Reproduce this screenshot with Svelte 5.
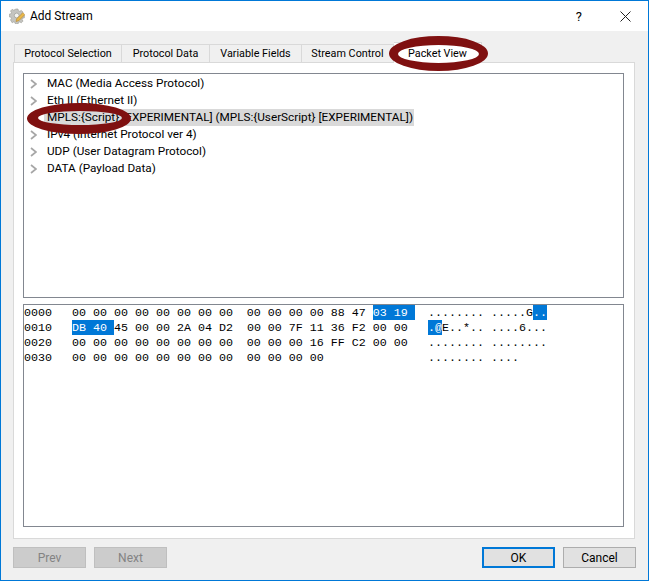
<script lang="ts">
    const tabs = ["Protocol Selection", "Protocol Data", "Variable Fields", "Stream Control", "Packet View"];
    const protocols = [
        "MAC (Media Access Protocol)",
        "Eth II (Ethernet II)",
        "MPLS:{Script} [EXPERIMENTAL] (MPLS:{UserScript} [EXPERIMENTAL])",
        "IPv4 (Internet Protocol ver 4)",
        "UDP (User Datagram Protocol)",
        "DATA (Payload Data)",
    ];
    // before / selected / after for the hex and ascii columns
    const rows = [
        { addr: "0000", hex: ["00 00 00 00 00 00 00 00  00 00 00 00 88 47 ", "03 19 ", ""], ascii: ["........ .....G", "..", ""] },
        { addr: "0010", hex: ["", "DB 40 ", "45 00 00 2A 04 D2  00 00 7F 11 36 F2 00 00"], ascii: ["", ".@", "E..*.. ....6..."] },
        { addr: "0020", hex: ["00 00 00 00 00 00 00 00  00 00 00 16 FF C2 00 00", "", ""], ascii: ["........ ........", "", ""] },
        { addr: "0030", hex: ["00 00 00 00 00 00 00 00  00 00 00 00", "", ""], ascii: ["........ ....", "", ""] },
    ];
</script>

<div class="window">
    <header class="titlebar">
        <svg class="app-icon" width="16" height="16" viewBox="0 0 16 16">
            <path d="M6.5 1h2.500l.4 1.700 1.400.6 1.500-.9 1.700 1.700-.9 1.500.6 1.400 1.700.4v2.400l-1.700.4-.6 1.400.9 1.500-1.700 1.700-1.500-.9-1.400.6-.4 1.700H6.500l-.4-1.700-1.400-.6-1.500.9L1.500 12l.9-1.500-.6-1.400L.1 8.700V6.300l1.700-.4.6-1.400-.9-1.500 1.700-1.700 1.500.9 1.400-.6z" fill="#c4c4c0" stroke="#9a9a94" stroke-width=".6" />
            <circle cx="7.700" cy="7.500" r="2.400" fill="#f4f4f0" stroke="#9a9a94" stroke-width=".7" />
            <path d="M7 13.500l.8-2.800 6-6 2 2-6 6z" fill="#e8b84a" stroke="#b5852a" stroke-width=".6" />
        </svg>
        <span class="title">Add Stream</span>
        <span class="help">?</span>
        <svg class="close" width="11" height="11" viewBox="0 0 11 11">
            <path d="M.5.500l10 10M10.500.500l-10 10" stroke="#222" stroke-width="1" fill="none" />
        </svg>
    </header>

    <main class="body">
        <div class="tabs">
            {#each tabs as tab, i}
                <div class="tab" class:active={i === tabs.length - 1}>{tab}</div>
            {/each}
        </div>
        <div class="pane">
            <div class="tree box">
                {#each protocols as name, i}
                    <div class="tree-row">
                        <svg class="chevron" width="7" height="10" viewBox="0 0 7 10">
                            <path d="M1 1l5 4-5 4" stroke="#a6a6a6" stroke-width="1.700" fill="none" />
                        </svg>
                        <span class="tree-label" class:selected={i === 2}>{name}</span>
                    </div>
                {/each}
            </div>
            <div class="hex box">
                {#each rows as row}
                    <div class="hex-row">
                        <span class="addr">{row.addr}</span>
                        <span class="bytes">{row.hex[0]}{#if row.hex[1]}<span class="sel">{row.hex[1]}</span>{/if}{row.hex[2]}</span>
                        <span class="ascii">{row.ascii[0]}{#if row.ascii[1]}<span class="sel">{row.ascii[1]}</span>{/if}{row.ascii[2]}</span>
                    </div>
                {/each}
            </div>
        </div>
        <div class="buttons">
            <button disabled>Prev</button>
            <button disabled>Next</button>
            <span class="spacer"></span>
            <button class="default">OK</button>
            <button>Cancel</button>
        </div>
    </main>

    <!-- hand drawn annotation rings on top of the dialog -->
    <svg class="rings" width="649" height="581" viewBox="0 0 649 581">
        <path fill="#7f1010" fill-rule="evenodd" d="M389 53.500a49.500 17.500 0 1 0 99 0a49.500 17.500 0 1 0-99 0zM398 54a40.500 9 0 1 0 81 0a40.500 9 0 1 0-81 0z" />
        <path fill="#7f1010" fill-rule="evenodd" d="M27 118.500a52 15.500 0 1 0 104 0a52 15.500 0 1 0-104 0zM38 118a42 7 0 1 0 84 0a42 7 0 1 0-84 0z" />
    </svg>
</div>

<style>
    :global(body) {
        margin: 0;
    }

    .window {
        position: relative;
        display: flex;
        flex-direction: column;
        box-sizing: border-box;
        width: 649px;
        height: 581px;
        border: 1px solid #0078d7;
        background-color: #f0f0f0;
        font-family: Roboto, "Noto Sans", sans-serif;
        font-size: 12px;
        color: #000;
    }

    .titlebar {
        display: flex;
        align-items: center;
        height: 30px;
        padding: 0 17px 0 8px;
        background-color: #fff;
    }
    .app-icon {
        margin-right: 5px;
    }
    .help {
        margin-left: auto;
        margin-right: 38px;
        font-size: 13px;
    }

    .body {
        flex: 1;
        display: flex;
        flex-direction: column;
        padding: 13px 12px 12px;
    }

    .tabs {
        display: flex;
        height: 18px;
        padding-left: 1px;
    }
    .tab {
        display: flex;
        align-items: center;
        justify-content: center;
        box-sizing: border-box;
        height: 19px;
        border: 1px solid #d9d9d9;
        border-left: 0;
        background-color: #f0f0f0;
        font-size: 10.8px;
    }
    .tab:first-child {
        border-left: 1px solid #d9d9d9;
        width: 108px;
    }
    .tab:nth-child(2) {
        width: 88px;
    }
    .tab:nth-child(3) {
        width: 92px;
    }
    .tab:nth-child(4) {
        width: 92px;
    }
    .tab.active {
        width: 88px;
        height: 21px;
        margin-top: -2px;
        background-color: #fff;
        border-bottom: 0;
        z-index: 1;
    }

    .pane {
        flex: 1;
        display: flex;
        flex-direction: column;
        gap: 6px;
        margin-right: 1px;
        padding: 10px 10px 11px 9px;
        border: 1px solid #d9d9d9;
        background-color: #fff;
    }
    .box {
        flex: 1;
        box-sizing: border-box;
        border: 1px solid #828790;
        background-color: #fff;
    }

    .tree {
        padding-top: 1px;
    }
    .tree-row {
        display: flex;
        align-items: center;
        height: 17px;
        white-space: nowrap;
    }
    .chevron {
        margin-left: 6px;
        margin-right: 10px;
    }
    .tree-label {
        font-size: 11.75px;
        line-height: 17px;
        padding-right: 1px;
    }
    .tree-label.selected {
        background-color: #d9d9d9;
        margin-left: -3px;
        padding-left: 3px;
    }

    .hex {
        font-family: "Liberation Mono", monospace;
        font-size: 11.67px;
        line-height: 17px;
    }
    .hex-row {
        display: flex;
        height: 15px;
        white-space: pre;
    }
    .addr {
        width: 48px;
    }
    .bytes {
        width: 356px;
    }
    .sel {
        display: inline-block;
        height: 15px;
        background-color: #0078d7;
        color: #fff;
    }

    .buttons {
        display: flex;
        gap: 8px;
        margin-top: 8px;
    }
    .spacer {
        flex: 1;
    }
    button {
        box-sizing: border-box;
        width: 73px;
        height: 21px;
        padding: 0;
        border: 1px solid #adadad;
        background-color: #e1e1e1;
        font: inherit;
        color: #000;
    }
    button:disabled {
        background-color: #cccccc;
        border-color: #bfbfbf;
        color: #838383;
    }
    button.default {
        border: 2px solid #0078d7;
    }

    .rings {
        position: absolute;
        left: -1px;
        top: -1px;
        z-index: 2;
        pointer-events: none;
    }
</style>
